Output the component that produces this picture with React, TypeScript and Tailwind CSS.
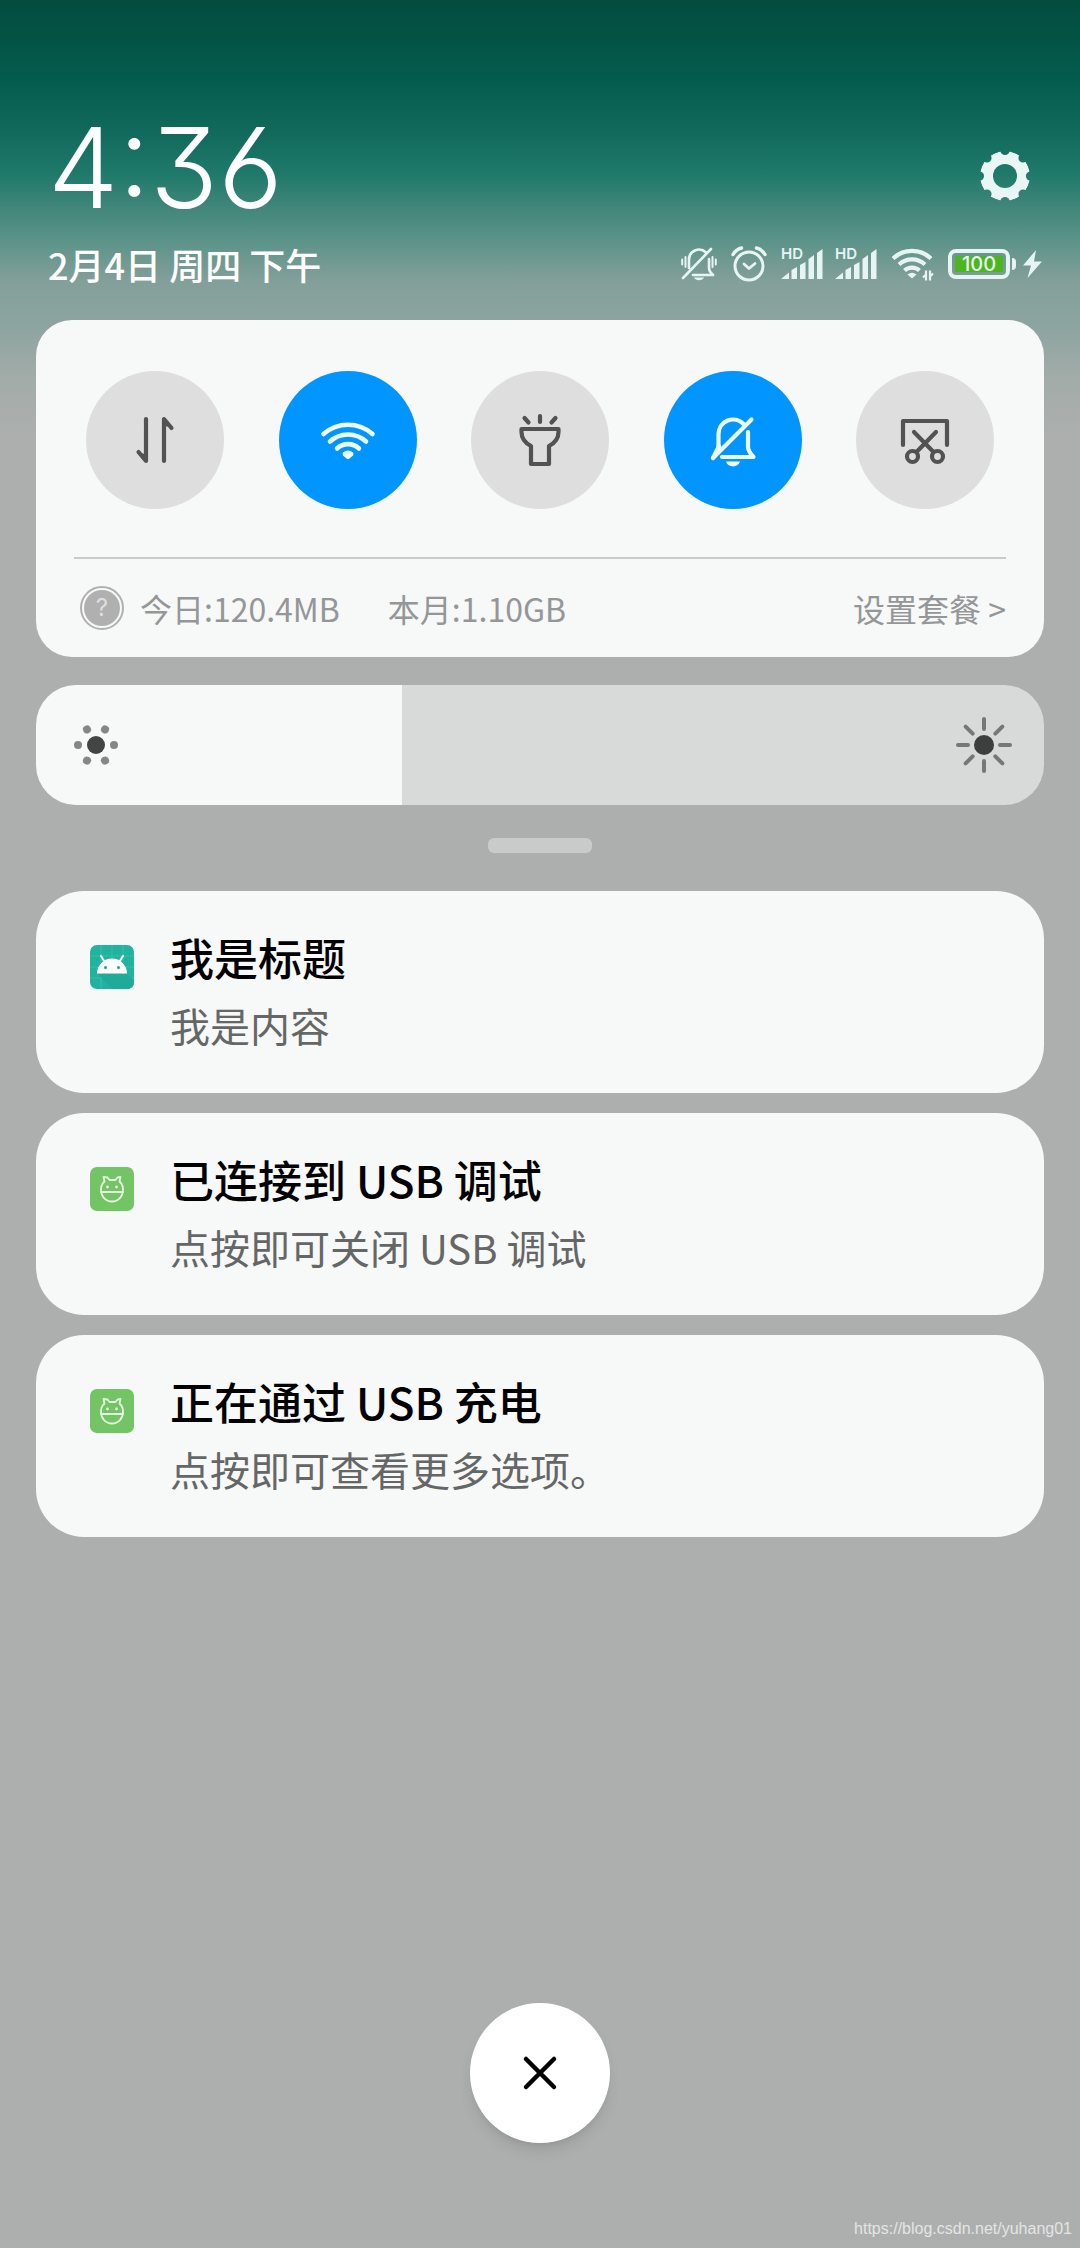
import { useState } from "react";
import type { ReactNode } from "react";

const AXES = [0, 45, 90, 135, 180, 225, 270, 315];

const GearIcon = () => (
  <svg width="50" height="50" viewBox="-25 -25 50 50" aria-hidden="true">
    <mask id="gear-cut">
      <circle r="25" fill="#fff" />
      <circle r="12" fill="#000" />
      {AXES.map((a) => (
        <circle key={a} cx="25.500" r="4.600" fill="#000" transform={`rotate(${a})`} />
      ))}
    </mask>
    <circle r="25" fill="#e9f6f5" mask="url(#gear-cut)" />
  </svg>
);

const MutedBellIcon = () => (
  <svg width="36" height="34" viewBox="0 0 36 34" fill="none" stroke="currentColor" strokeWidth="2.600" strokeLinecap="round" strokeLinejoin="round" aria-hidden="true">
    <path d="M8 21V13a10 10 0 0 1 17-7.500M28 12v8c0 4 1 5 4 8H12M30 2 2 31" />
    <path d="M4.500 10v10M1.200 12.500v5M31.500 10v10M34.800 12.500v5" strokeWidth="2" />
    <path d="M13 30.500h10c-1.500 3.500-8.500 3.500-10 0z" fill="currentColor" stroke="none" />
  </svg>
);

const AlarmIcon = () => (
  <svg width="36" height="36" viewBox="0 0 36 36" fill="none" stroke="currentColor" strokeLinecap="round" strokeLinejoin="round" aria-hidden="true">
    <circle cx="18" cy="20" r="14" strokeWidth="3" />
    <path d="m13 18 5 4.500 6-5" strokeWidth="2.800" />
    <path d="M2 8.500Q5 3.500 10.500 2M34 8.500Q31 3.500 25.500 2" strokeWidth="3.400" />
  </svg>
);

const SignalIcon = () => (
  <div className="relative h-8 w-[42px]">
    <span className="absolute left-0 top-0 text-[15px] leading-3 font-semibold">HD</span>
    <svg className="size-full" viewBox="0 0 42 32" fill="currentColor" aria-hidden="true">
      <path d="M0 31 8 24.500V31zM10.500 22l5.500-3v12h-5.500zM19 17l5.500-3v17H19zM27.500 11l5.500-4v24h-5.500zM36 5l5.500-4v30H36z" />
    </svg>
  </div>
);

const StatusWifiIcon = () => (
  <svg width="43" height="34" viewBox="0 0 43 34" fill="none" stroke="currentColor" strokeWidth="4.200" aria-hidden="true">
    <path d="M2 11.500a27.500 27.500 0 0 1 38 0M8 17.500a19 19 0 0 1 26 0M13.500 23.500a11 11 0 0 1 15 0" />
    <path d="M16.500 27.500q4.500-3.500 9 0L21 31.500z" fill="currentColor" stroke="none" />
    <path d="M35 23.500v10M35 27.500l-3 3M39 33.500v-10M39 29.500l3-3" strokeWidth="2.200" />
  </svg>
);

const Battery = () => (
  <div className="flex items-center gap-0.5">
    <div className="flex h-[30px] w-[62px] rounded-lg border-4 border-current p-[3px]">
      <div className="flex flex-1 items-center justify-center bg-[#4cb51f] text-xl font-medium">100</div>
    </div>
    <div className="h-3 w-1 rounded-r-full bg-current" />
  </div>
);

const BoltIcon = () => (
  <svg width="22" height="30" viewBox="0 0 22 30" fill="currentColor" aria-hidden="true">
    <path d="M14 1 1 16.500h8L5.500 29 20 12.500h-8z" />
  </svg>
);

const DataIcon = () => (
  <svg width="56" height="56" viewBox="0 0 56 56" fill="none" stroke="currentColor" strokeWidth="4.200" strokeLinecap="round" strokeLinejoin="round" aria-hidden="true">
    <path d="M19 7v42l-7.500-9M37 49V7l7.500 9" />
    <path d="M19 42v7l-7-8zM37 14V7l7 8z" fill="currentColor" stroke="none" />
  </svg>
);

const WifiIcon = () => (
  <svg width="56" height="56" viewBox="0 0 56 56" fill="none" stroke="currentColor" strokeWidth="4.600" strokeLinecap="round" aria-hidden="true">
    <path d="M3.500 22a37 37 0 0 1 49 0M10 29.500a26.500 26.500 0 0 1 36 0M17 36.500a16 16 0 0 1 22 0" />
    <path d="M23 40.500q5-4 10 0 1 1.500 0 3l-3.500 3q-1.500 1.200-3 0l-3.500-3q-1-1.500 0-3z" fill="currentColor" stroke="none" />
  </svg>
);

const TorchIcon = () => (
  <svg width="56" height="56" viewBox="0 0 56 56" fill="none" stroke="currentColor" strokeWidth="4.200" strokeLinecap="round" strokeLinejoin="round" aria-hidden="true">
    <path d="M9.500 17h37v3q0 9-9.500 14v18H19V34q-9.500-5-9.500-14z" />
    <path d="M12.500 6l4 4.500M28 4v6M43.500 6l-4 4.500" />
  </svg>
);

const SilentIcon = () => (
  <svg width="56" height="56" viewBox="0 0 56 56" fill="none" stroke="currentColor" strokeWidth="4.200" strokeLinecap="round" strokeLinejoin="round" aria-hidden="true">
    <path d="M13.500 36V22a14.500 14.500 0 0 1 25-10M43 20v15c0 4 2 6 5.500 10H17M46.500 7.500 8 46" />
    <path d="M8 46l6-12V36" />
    <path d="M21 49.500h14c-2 6.500-12 6.500-14 0z" fill="currentColor" stroke="none" />
  </svg>
);

const ScreenshotIcon = () => (
  <svg width="56" height="56" viewBox="0 0 56 56" fill="none" stroke="currentColor" strokeWidth="4.200" strokeLinecap="round" strokeLinejoin="round" aria-hidden="true">
    <path d="M6 33V9h44v24M17 20l19.500 20M39 20 19.500 40" />
    <circle cx="15.500" cy="44.500" r="5.500" />
    <circle cx="40.500" cy="44.500" r="5.500" />
  </svg>
);

const DimIcon = () => (
  <svg width="44" height="44" viewBox="-22 -22 44 44" aria-hidden="true">
    <circle r="9" fill="#434545" />
    {[0, 60, 120, 180, 240, 300].map((a) => (
      <circle key={a} cx="18" r="4" fill="#858686" transform={`rotate(${a})`} />
    ))}
  </svg>
);

const BrightIcon = () => (
  <svg width="56" height="56" viewBox="-28 -28 56 56" aria-hidden="true">
    <circle r="10" fill="#3d3f3f" />
    {AXES.map((a) => (
      <path key={a} d="M16 0h10" stroke="#767878" strokeWidth="4" strokeLinecap="round" transform={`rotate(${a})`} />
    ))}
  </svg>
);

const AndroidIcon = () => (
  <svg width="44" height="44" viewBox="0 0 44 44" aria-hidden="true">
    <rect width="44" height="44" rx="7" fill="#22b3a0" />
    <path d="M11 0v44M22 0v44M33 0v44M0 11h44M0 22h44M0 33h44" stroke="#49c2b2" strokeWidth="0.600" />
    <path d="M8 29h29l7 6v2q0 7-7 7H22z" fill="#1fab98" />
    <path d="M7 28.500a15 15 0 0 1 30 0z" fill="#fff" />
    <path d="m11 11 4 6.500M33 11l-4 6.500" stroke="#fff" strokeWidth="2" strokeLinecap="round" />
    <circle cx="15.500" cy="22.500" r="1.500" fill="#1ea28f" />
    <circle cx="28.500" cy="22.500" r="1.500" fill="#1ea28f" />
  </svg>
);

const UsbDebugIcon = () => (
  <svg width="44" height="44" viewBox="0 0 44 44" fill="none" stroke="#e6f8df" strokeWidth="1.800" strokeLinecap="round" strokeLinejoin="round" aria-hidden="true">
    <rect width="44" height="44" rx="7" fill="#72c464" stroke="none" />
    <path d="M13.500 10l1 4.500q-3.500 3-3.500 8c0 7 4.500 12 11 12s11-5 11-12q0-5-3.500-8l1-4.500-3 .5-2 2.500h-6l-2-2.500z" />
    <path d="M11 25h22" />
    <circle cx="17.500" cy="20" r="1.400" fill="#e6f8df" stroke="none" />
    <circle cx="26.500" cy="20" r="1.400" fill="#e6f8df" stroke="none" />
  </svg>
);

const toggles = [
  { label: "移动数据", icon: DataIcon, on: false },
  { label: "WLAN", icon: WifiIcon, on: true },
  { label: "手电筒", icon: TorchIcon, on: false },
  { label: "静音", icon: SilentIcon, on: true },
  { label: "截屏", icon: ScreenshotIcon, on: false },
];

const notifications = [
  { icon: AndroidIcon, title: "我是标题", desc: "我是内容" },
  { icon: UsbDebugIcon, title: "已连接到 USB 调试", desc: "点按即可关闭 USB 调试" },
  { icon: UsbDebugIcon, title: "正在通过 USB 充电", desc: "点按即可查看更多选项。" },
];

const Header = () => (
  <header className="px-3 pt-[107px]">
    <div className="flex items-center justify-between">
      <time className="font-['Inter'] text-[112px] leading-[120px] font-light [font-feature-settings:'cv03','cv09']">4:36</time>
      <button type="button" aria-label="设置" className="mt-[18px] mr-0.5">
        <GearIcon />
      </button>
    </div>
    <div className="mt-3 flex h-[50px] items-center justify-between">
      <p className="text-4xl font-medium">2月4日 周四 下午</p>
      <div className="-mr-3 flex items-center gap-[14px] font-['Inter'] text-[#e6f5f3]">
        <MutedBellIcon />
        <AlarmIcon />
        <div className="flex gap-3">
          <SignalIcon />
          <SignalIcon />
        </div>
        <StatusWifiIcon />
        <div className="flex items-center gap-1.5">
          <Battery />
          <BoltIcon />
        </div>
      </div>
    </div>
  </header>
);

const Card = ({ children, className }: { children: ReactNode; className: string }) => (
  <section className={`bg-[#f7f8f8] ${className}`}>{children}</section>
);

const QuickSettings = () => {
  const [active, setActive] = useState(toggles.map((t) => t.on));

  return (
    <Card className="mt-[31px] rounded-[36px] px-[38px] pt-[51px]">
      <div className="flex justify-between px-3">
        {toggles.map((t, i) => (
          <button
            key={t.label}
            type="button"
            aria-label={t.label}
            aria-pressed={active[i]}
            onClick={() => setActive(active.map((on, n) => (n === i ? !on : on)))}
            className={`flex size-[138px] items-center justify-center rounded-full ${
              active[i] ? "bg-[#0095ff] text-[#edfdff]" : "bg-[#dedede] text-[#525252]"
            }`}
          >
            <t.icon />
          </button>
        ))}
      </div>
      <div className="mt-12 flex h-[100px] items-center border-t-2 border-[#c9caca] text-[32px] text-[#959697]">
        <span className="ml-1.5 flex size-11 items-center justify-center rounded-full border-2 border-[#b0b0b0] p-0.5">
          <span className="flex size-full items-center justify-center rounded-full bg-[#b0b0b0] font-['Inter'] text-2xl text-[#dedede]">?</span>
        </span>
        <span className="ml-4">今日:120.4MB</span>
        <span className="ml-12">本月:1.10GB</span>
        <a href="#plan" className="ml-auto">设置套餐 &gt;</a>
      </div>
    </Card>
  );
};

const Brightness = () => {
  const [value, setValue] = useState(36.3);

  return (
    <div className="relative mt-7 h-[120px]">
      <input
        type="range"
        min="0"
        max="100"
        step="any"
        value={value}
        aria-label="亮度"
        onChange={(e) => setValue(Number(e.target.value))}
        className="block size-full appearance-none rounded-[40px] [&::-webkit-slider-thumb]:appearance-none"
        style={{ background: `linear-gradient(to right, #f7f8f8 ${value}%, #d8d9d9 ${value}%)` }}
      />
      <div className="pointer-events-none absolute inset-0 flex items-center justify-between pr-8 pl-[38px]">
        <DimIcon />
        <BrightIcon />
      </div>
    </div>
  );
};

export default function App() {
  return (
    <main className="flex min-h-screen flex-col bg-[#adafae] bg-[linear-gradient(to_bottom,#034c3e_0px,#045c4e_80px,#10695b_130px,#207a6b_175px,#43877b_210px,#5b9389_240px,#829f99_280px,#8ea5a1_330px,#a3aca9_380px,#adafae_440px)] px-9 font-['Noto_Sans_CJK_SC',sans-serif] text-white">
      <Header />
      <QuickSettings />
      <Brightness />
      <div className="mx-auto mt-[33px] h-[15px] w-[104px] rounded-md bg-[#c9cbca]" />

      <ul className="mt-[38px] space-y-5">
        {notifications.map((n) => (
          <li key={n.title}>
            <Card className="flex h-[202px] items-start gap-9 rounded-[48px] pt-9 pl-[54px]">
              <span className="mt-[18px]">
                <n.icon />
              </span>
              <div>
                <h2 className="text-[44px] leading-[60px] font-medium text-black">{n.title}</h2>
                <p className="mt-2 text-[40px] leading-[60px] text-[#656666]">{n.desc}</p>
              </div>
            </Card>
          </li>
        ))}
      </ul>

      <footer className="mt-auto flex flex-col items-center">
        <button type="button" aria-label="清除全部" className="flex size-[140px] items-center justify-center rounded-full bg-white text-black shadow-lg">
          <svg width="40" height="40" viewBox="0 0 40 40" fill="none" stroke="currentColor" strokeWidth="4.500" strokeLinecap="round" aria-hidden="true">
            <path d="m6 6 28 28M34 6 6 34" />
          </svg>
        </button>
        <p className="-mr-7 mt-[74px] mb-[7px] self-end font-['Liberation_Sans'] text-base leading-6 text-[#e3e4e4]">https://blog.csdn.net/yuhang01</p>
      </footer>
    </main>
  );
}
